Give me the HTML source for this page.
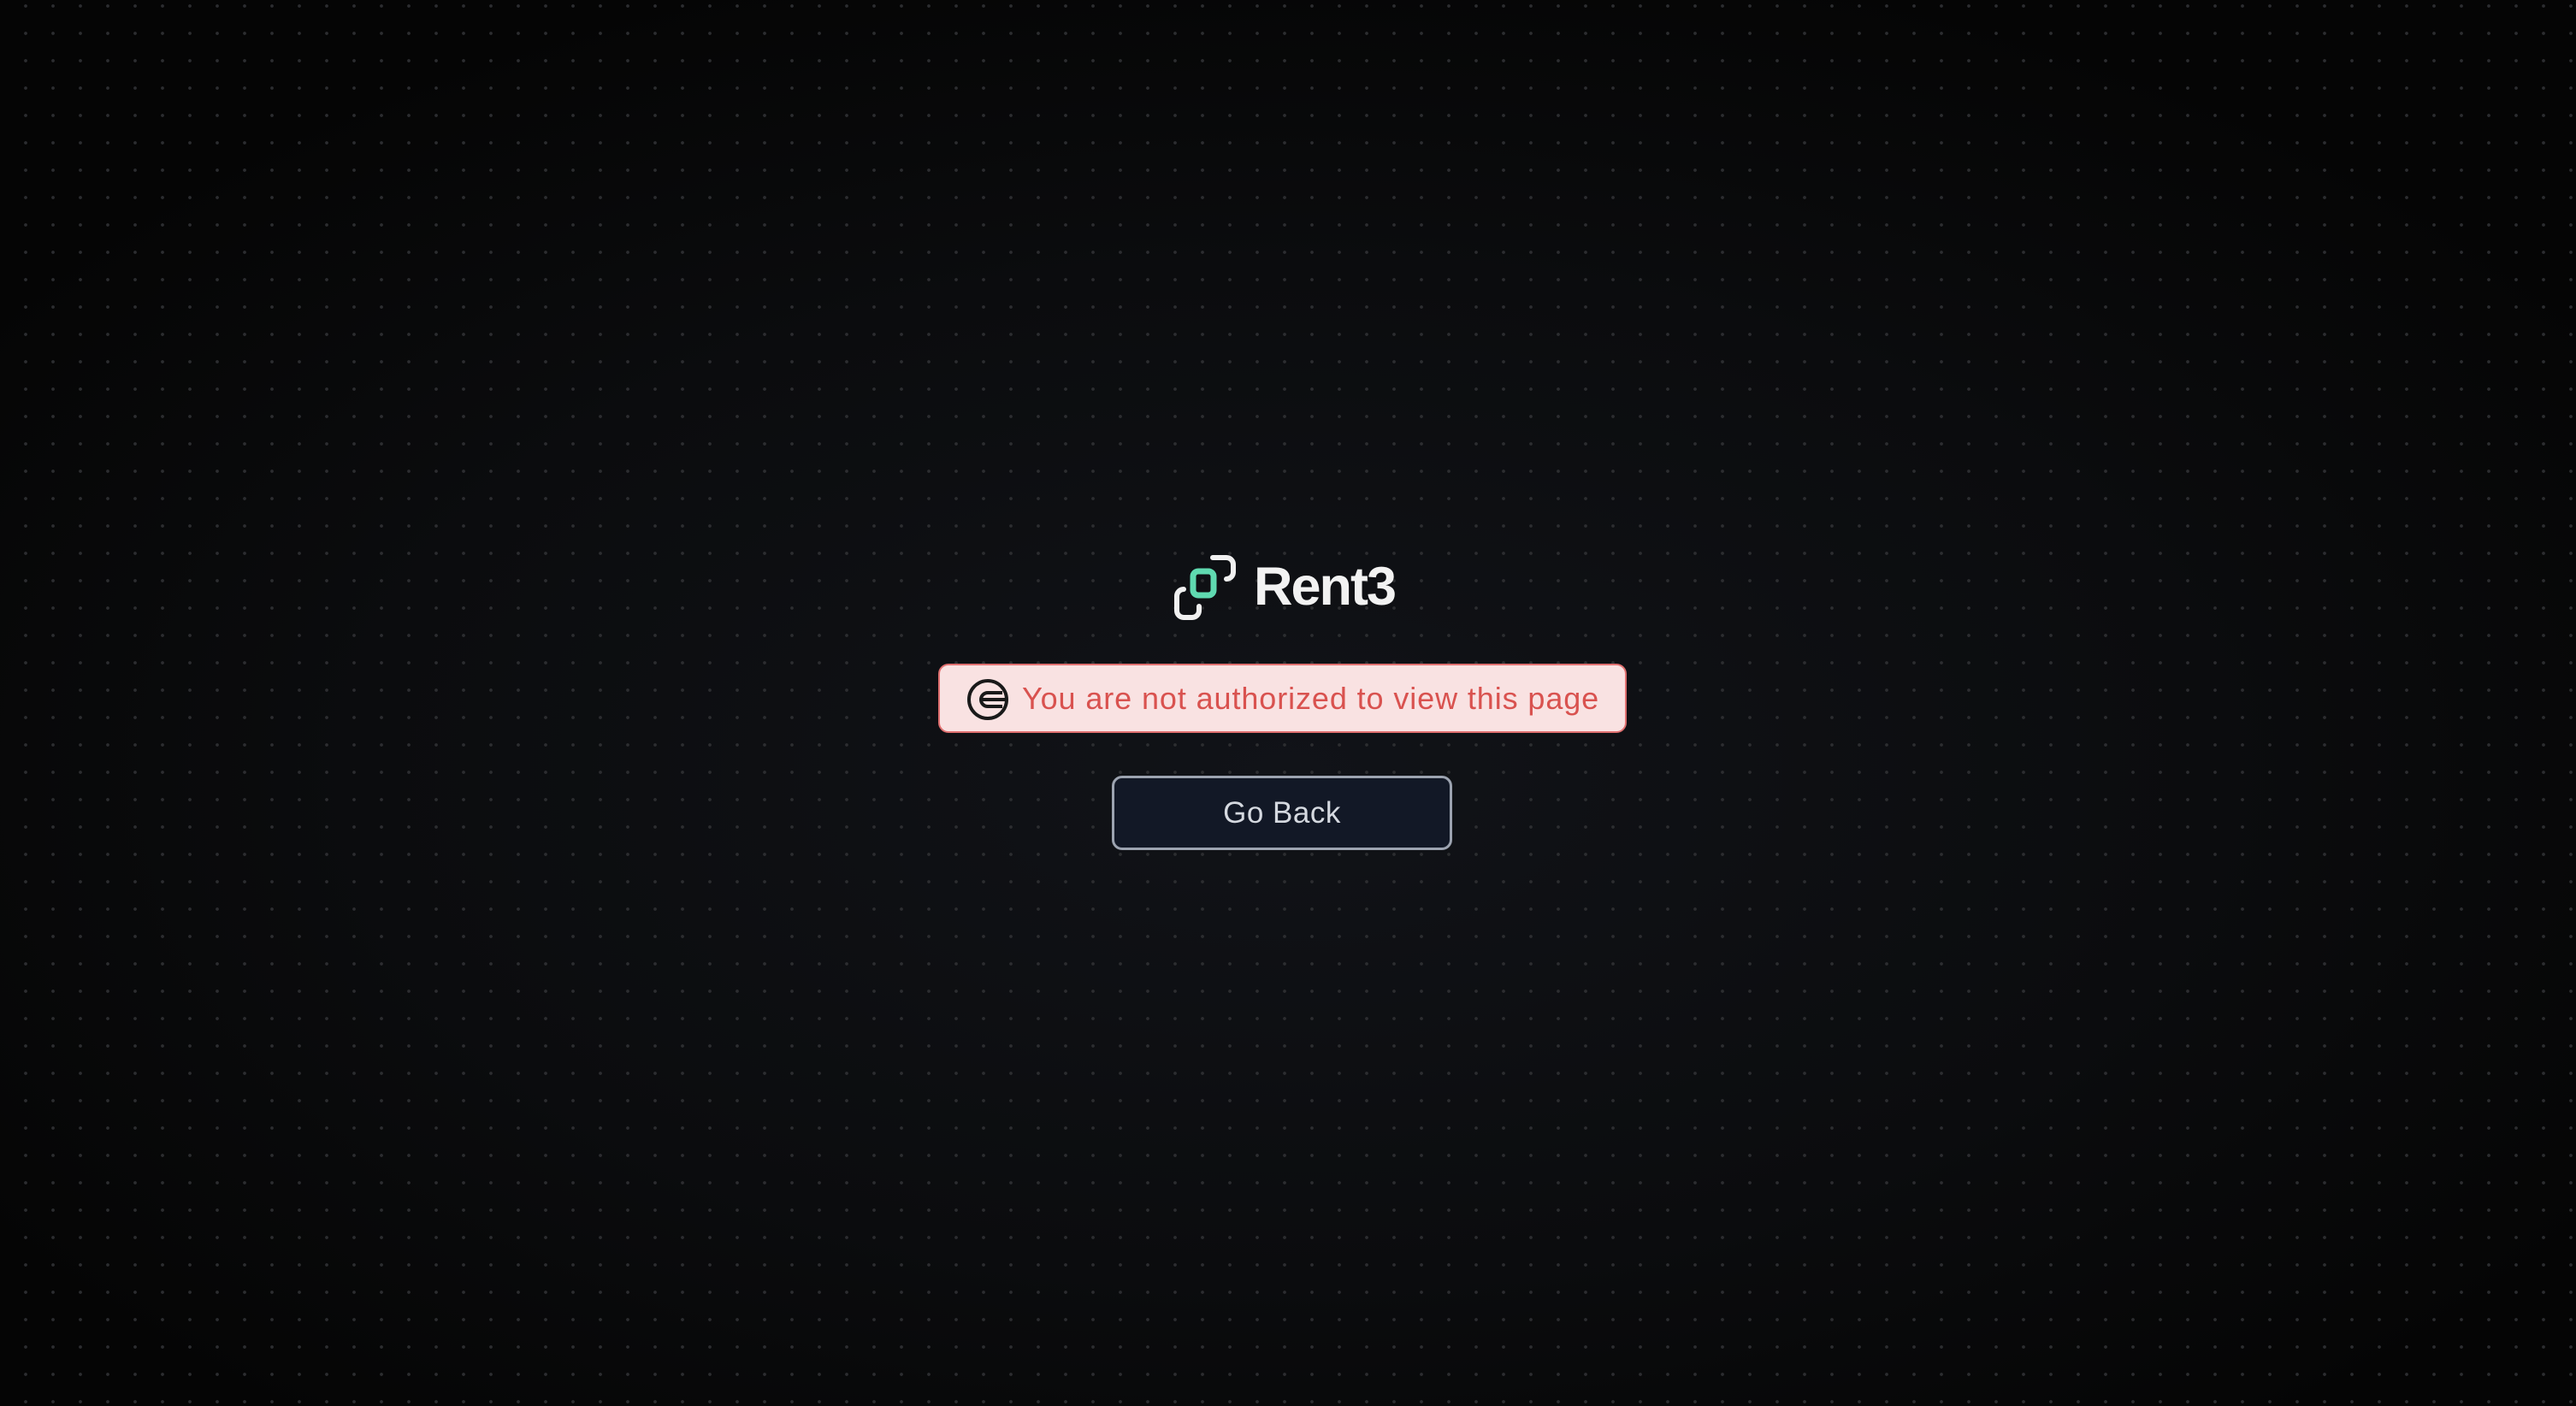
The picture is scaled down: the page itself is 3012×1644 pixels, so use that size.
<!DOCTYPE html>
<html><head><meta charset="utf-8"><style>
html,body{margin:0;padding:0;width:3012px;height:1644px;overflow:hidden;}
body{background:radial-gradient(ellipse 60% 60% at 50% 55%,#111318 0%,#0b0c0e 60%,#050505 100%);font-family:"Liberation Sans",sans-serif;position:relative;}
.dots{position:absolute;inset:0;background-image:radial-gradient(circle,#2c2d30 1.6px,transparent 2.2px);background-size:32px 32px;background-position:14px -9px;}
.logo{position:absolute;left:1370px;top:647px;width:80px;height:80px;}
.brand{position:absolute;left:1466px;top:641px;font-size:63px;font-weight:bold;color:#f2f2f2;letter-spacing:-2px;line-height:90px;}
.alert{position:absolute;left:1097px;top:776px;width:805px;height:81px;box-sizing:border-box;background:#f9e2e2;border:2px solid #e07070;border-radius:12px;}
.alert svg{position:absolute;left:31px;top:15px;}
.alert span{position:absolute;left:96px;top:17px;font-size:36px;letter-spacing:0.9px;color:#d9524f;line-height:44px;}
.btn{position:absolute;left:1300px;top:907px;width:398px;height:87px;box-sizing:border-box;background:#121826;border:3px solid #9ca3b0;border-radius:12px;color:#d5d9e0;font-size:35px;letter-spacing:0.5px;text-align:center;line-height:81px;}
</style></head><body>
<div class="dots"></div>
<svg class="logo" viewBox="0 0 80 80">
<path d="M48 5 H64 a8 8 0 0 1 8 8 V22 a8 8 0 0 1 -8 8" fill="none" stroke="#f0f0f0" stroke-width="6" stroke-linecap="round"/>
<path d="M14 42 a8 8 0 0 0 -8 8 V67 a8 8 0 0 0 8 8 H24 a8 8 0 0 0 8 -8 V62" fill="none" stroke="#f0f0f0" stroke-width="6" stroke-linecap="round"/>
<rect x="25" y="21" width="24" height="28" rx="6" fill="none" stroke="#5fd9b0" stroke-width="7"/>
</svg>
<div class="brand">Rent3</div>
<div class="alert">
<svg width="50" height="50" viewBox="0 0 50 50"><circle cx="25" cy="25" r="22" fill="none" stroke="#1a1a1a" stroke-width="4"/><path d="M42 17 H25 a8 8 0 0 0 0 16 H42 M47 25 H17" fill="none" stroke="#1a1a1a" stroke-width="4"/></svg>
<span>You are not authorized to view this page</span>
</div>
<div class="btn">Go Back</div>
</body></html>
